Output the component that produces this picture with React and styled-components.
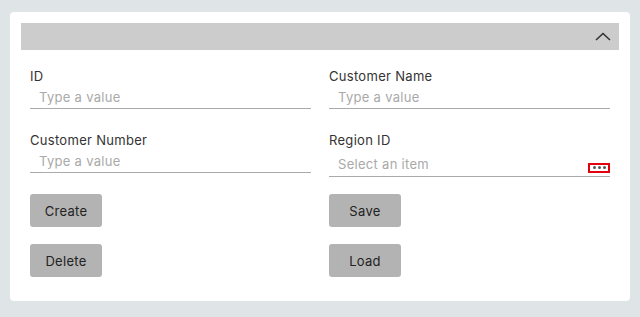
import React from "react";
import styled, { createGlobalStyle } from "styled-components";

const GlobalStyle = createGlobalStyle`
  html, body { margin: 0; padding: 0; }
  body {
    background: #dfe4e7;
    font-family: Inter, "Noto Sans", "Liberation Sans", sans-serif;
    font-size: 13px;
    letter-spacing: 0.3px;
    color: #333;
  }
  * { box-sizing: border-box; }
`;

const Page = styled.div`
  padding: 12px 10px 16px;
`;

const Card = styled.div`
  background: #fff;
  border-radius: 4px;
  padding: 11px 11px 24px;
`;

const Header = styled.div`
  height: 27px;
  background: #cccccc;
  display: flex;
  align-items: center;
  justify-content: flex-end;
  padding-right: 8px;
`;

const Body = styled.div`
  margin-top: 12px;
  padding: 0 9px;
  display: grid;
  grid-template-columns: 1fr 1fr;
  column-gap: 18px;
  row-gap: 17px;
  align-items: start;
`;

const Field = styled.div`
  display: flex;
  flex-direction: column;
`;

const Label = styled.label`
  display: block;
  padding-top: 4px;
  height: 24px;
  line-height: 20px;
  font-size: 13px;
  color: #333;
`;

const InputBox = styled.div`
  height: ${(p) => (p.$tall ? 27 : 23)}px;
  border-bottom: 1px solid #aaaaaa;
  display: flex;
  align-items: center;
  padding: ${(p) => (p.$tall ? "2px 0 0 9px" : "0 0 0 9px")};
  color: #a9a9a9;
  font-size: 13px;
`;

const Placeholder = styled.span`
  flex: 1;
`;

const DotsButton = styled.span`
  width: 22px;
  height: 10px;
  border: 2px solid #e3000f;
  display: flex;
  align-items: center;
  justify-content: center;
  gap: 2px;
  margin-top: 7px;
`;

const Dot = styled.span`
  width: 3px;
  height: 3px;
  border-radius: 50%;
  background: #555;
`;

const Button = styled.button`
  width: 72px;
  height: 33px;
  border: none;
  border-radius: 3px;
  background: #b3b3b3;
  color: #222;
  font-family: inherit;
  font-size: 13px;
  letter-spacing: 0.3px;
  padding: 0;
  cursor: pointer;
`;

const Chevron = () => (
  <svg width="16" height="9" viewBox="0 0 16 9" fill="none">
    <path d="M1 8 L8 1.5 L15 8" stroke="#333" strokeWidth="1.6" />
  </svg>
);

function TextField({ label, placeholder }) {
  return (
    <Field>
      <Label>{label}</Label>
      <InputBox>
        <Placeholder>{placeholder}</Placeholder>
      </InputBox>
    </Field>
  );
}

export default function App() {
  return (
    <>
      <GlobalStyle />
      <Page>
        <Card>
          <Header>
            <Chevron />
          </Header>
          <Body>
            <TextField label="ID" placeholder="Type a value" />
            <TextField label="Customer Name" placeholder="Type a value" />
            <TextField label="Customer Number" placeholder="Type a value" />
            <Field>
              <Label>Region ID</Label>
              <InputBox $tall>
                <Placeholder>Select an item</Placeholder>
                <DotsButton>
                  <Dot />
                  <Dot />
                  <Dot />
                </DotsButton>
              </InputBox>
            </Field>
            <Button>Create</Button>
            <Button>Save</Button>
            <Button>Delete</Button>
            <Button>Load</Button>
          </Body>
        </Card>
      </Page>
    </>
  );
}
